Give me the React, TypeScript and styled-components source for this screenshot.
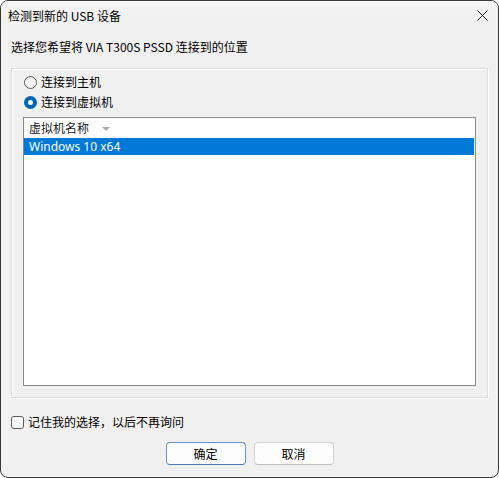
import React from "react";
import styled, { createGlobalStyle } from "styled-components";

const GlobalStyle = createGlobalStyle`
  html, body {
    margin: 0;
    padding: 0;
    background: #ffffff;
  }
  body {
    font-family: "Segoe UI", "Noto Sans", "Noto Sans CJK SC", sans-serif;
    font-size: 12px;
    color: #000;
  }
`;

const Window = styled.div`
  width: 499px;
  height: 478px;
  box-sizing: border-box;
  border: 1px solid #3a3a3a;
  border-radius: 8px;
  background: #f0f0f0;
  overflow: hidden;
  display: flex;
  flex-direction: column;
`;

const TitleBar = styled.div`
  height: 29px;
  display: flex;
  align-items: center;
  justify-content: space-between;
  padding: 0 0 0 7px;
  background: linear-gradient(#f3f3f3, #f0f0f0);
`;

const Title = styled.span`
  font-family: "Noto Sans CJK SC", sans-serif;
  font-size: 12px;
  line-height: 16px;
`;

const CloseButton = styled.button`
  width: 32px;
  height: 29px;
  border: none;
  background: transparent;
  display: flex;
  align-items: center;
  justify-content: center;
  padding: 0;
`;

const Body = styled.div`
  flex: 1;
  display: flex;
  flex-direction: column;
  padding: 0 10px 12px 10px;
`;

const Prompt = styled.div`
  font-family: "Noto Sans CJK SC", sans-serif;
  line-height: 16px;
  margin-top: 9px;
`;

const GroupBox = styled.div`
  margin-top: 13px;
  height: 330px;
  box-sizing: border-box;
  border: 1px solid #dcdcdc;
  box-shadow: inset 1px 1px 0 #ffffff, 1px 1px 0 #ffffff;
  padding: 3px 11px 11px 11px;
  display: flex;
  flex-direction: column;
`;

const OptionRow = styled.label`
  display: flex;
  align-items: center;
  gap: 4px;
  height: 20px;
  font-family: "Noto Sans CJK SC", sans-serif;
  line-height: 16px;
`;

const Radio = styled.span<{ $checked?: boolean }>`
  width: 13px;
  height: 13px;
  box-sizing: border-box;
  border-radius: 50%;
  border: ${(p) => (p.$checked ? "none" : "1px solid #5a5a5a")};
  background: ${(p) => (p.$checked ? "#0064b8" : "#f8f8f8")};
  display: flex;
  align-items: center;
  justify-content: center;
  margin-left: 1px;
  &::after {
    content: "";
    display: ${(p) => (p.$checked ? "block" : "none")};
    width: 5px;
    height: 5px;
    border-radius: 50%;
    background: #ffffff;
  }
`;

const ListBox = styled.div`
  margin-top: 5px;
  flex: 1;
  border: 1px solid #8a8a8a;
  background: #ffffff;
  display: flex;
  flex-direction: column;
`;

const ColumnHeader = styled.div`
  height: 20px;
  display: flex;
  align-items: center;
  padding-left: 5px;
  gap: 13px;
  font-family: "Noto Sans CJK SC", sans-serif;
  line-height: 16px;
  color: #1a1a1a;
`;

const SortArrow = styled.span`
  width: 0;
  height: 0;
  border-left: 4px solid transparent;
  border-right: 4px solid transparent;
  border-top: 4px solid #a8a8a8;
  margin-top: 1px;
`;

const Item = styled.div<{ $selected?: boolean }>`
  height: 17px;
  display: flex;
  align-items: center;
  padding-left: 5px;
  margin-right: 1px;
  font-family: "Segoe UI", "Noto Sans", sans-serif;
  font-size: 12px;
  background: ${(p) => (p.$selected ? "#0078d7" : "transparent")};
  color: ${(p) => (p.$selected ? "#ffffff" : "#000000")};
`;

const RememberRow = styled.label`
  display: flex;
  align-items: center;
  gap: 4px;
  margin-top: 16px;
  height: 16px;
  font-family: "Noto Sans CJK SC", sans-serif;
  line-height: 16px;
`;

const Checkbox = styled.span`
  width: 13px;
  height: 13px;
  box-sizing: border-box;
  border: 1px solid #5a5a5a;
  border-radius: 3px;
  background: #f8f8f8;
`;

const ButtonRow = styled.div`
  margin-top: auto;
  display: flex;
  justify-content: center;
  gap: 8px;
`;

const Button = styled.button<{ $default?: boolean }>`
  width: 80px;
  height: 23px;
  box-sizing: border-box;
  border-radius: 4px;
  border: 1px solid ${(p) => (p.$default ? "#6c8fc4" : "#d2d2d2")};
  border-bottom-color: ${(p) => (p.$default ? "#4f78b4" : "#bdbdbd")};
  background: #fdfdfd;
  font-family: "Noto Sans CJK SC", sans-serif;
  font-size: 12px;
  line-height: 16px;
  color: #000;
  padding: 0;
`;

export default function App() {
  return (
    <>
      <GlobalStyle />
      <Window>
        <TitleBar>
          <Title>检测到新的 USB 设备</Title>
          <CloseButton aria-label="关闭">
            <svg width="11" height="11" viewBox="0 0 11 11">
              <path d="M0.5 0.5 L10.5 10.5 M10.5 0.5 L0.5 10.5" stroke="#1b1b1b" strokeWidth="1" />
            </svg>
          </CloseButton>
        </TitleBar>
        <Body>
          <Prompt>选择您希望将 VIA T300S PSSD 连接到的位置</Prompt>
          <GroupBox>
            <OptionRow>
              <Radio />
              连接到主机
            </OptionRow>
            <OptionRow>
              <Radio $checked />
              连接到虚拟机
            </OptionRow>
            <ListBox>
              <ColumnHeader>
                虚拟机名称
                <SortArrow />
              </ColumnHeader>
              <Item $selected>Windows 10 x64</Item>
            </ListBox>
          </GroupBox>
          <RememberRow>
            <Checkbox />
            记住我的选择，以后不再询问
          </RememberRow>
          <ButtonRow>
            <Button $default>确定</Button>
            <Button>取消</Button>
          </ButtonRow>
        </Body>
      </Window>
    </>
  );
}
